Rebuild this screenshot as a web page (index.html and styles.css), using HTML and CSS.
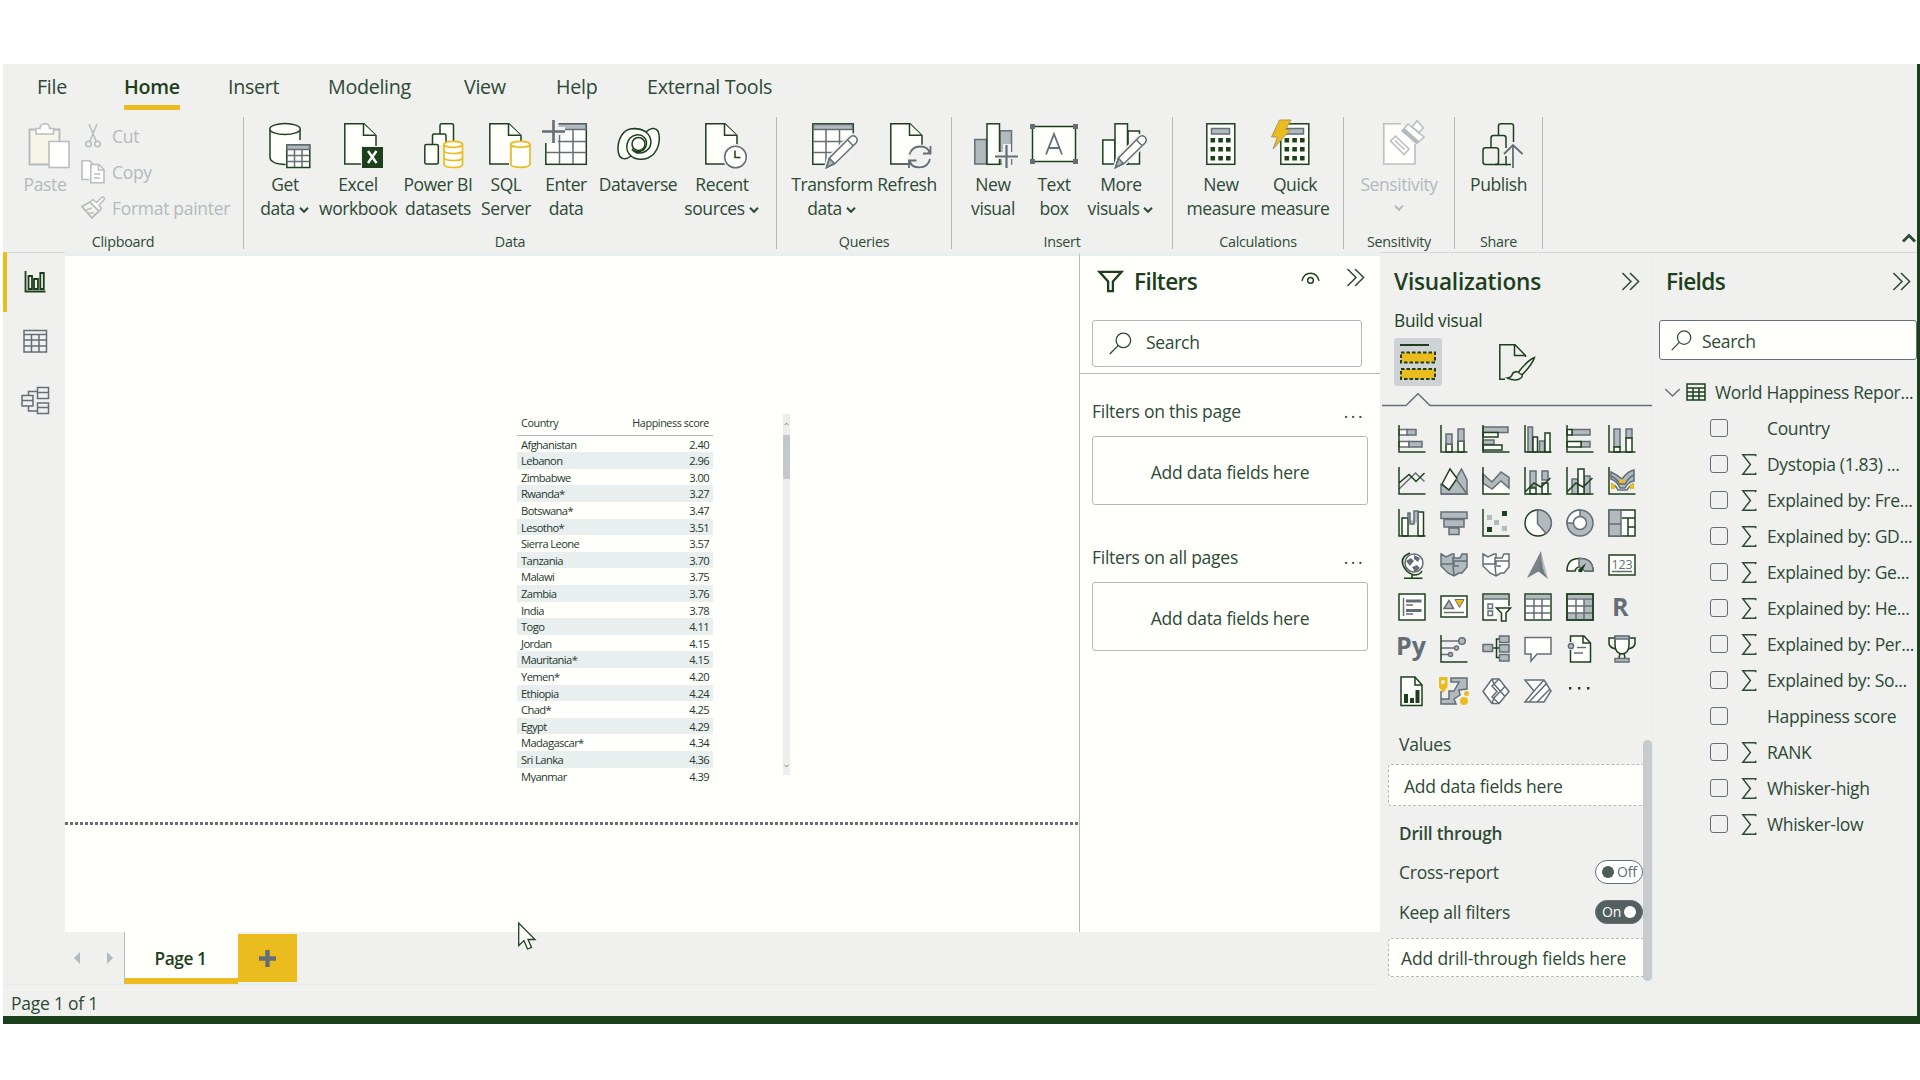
FILE: index.html
```html
<!DOCTYPE html>
<html lang="en">
<head>
<meta charset="utf-8">
<title>Report editor</title>
<link rel="stylesheet" href="styles.css">
</head>
<body>
<svg class="defs" width="0" height="0">
  <symbol id="page" viewBox="0 0 48 48" overflow="visible"><path class="w" d="M0.8 3.8H20L32 15.5V44H0.8Z"/><path class="w" d="M19.5 3.8V15.2H31.5"/></symbol>
  <symbol id="chev" viewBox="0 0 10 8"><path d="M1 1.8L5 5.8L9 1.8" fill="none" stroke="currentColor" stroke-width="2"/></symbol>
  <symbol id="dbl" viewBox="0 0 20 20"><path d="M1.5 1L10.5 10L1.5 19M9.5 1L18.5 10L9.5 19" fill="none" stroke="currentColor" stroke-width="1.6"/></symbol>
  <symbol id="lens" viewBox="0 0 24 24"><circle cx="15" cy="8.7" r="7.6" fill="none" stroke="currentColor" stroke-width="1.4"/><path d="M9.5 14.2L.8 23" stroke="currentColor" stroke-width="1.4"/></symbol>
  <symbol id="pencil" viewBox="0 0 48 48" overflow="visible"><path class="halo" d="M18.500 47.500L21.500 38L42 17.200Q45 14.500 47.800 17T48 23L27 43.500Z"/><path class="w s" d="M18.500 47.500L21.500 38L42 17.200Q45 14.500 47.800 17T48 23L27 43.500Z"/><path class="f s" d="M18.500 47.500L21.500 38.500L26.500 43.500Z"/><path class="n s" d="M39.500 20L45 25.500"/></symbol>
  <symbol id="calc" viewBox="0 0 48 48" overflow="visible"><rect class="w" x="9.800" y="3.800" width="28" height="40.500"/><rect class="f s" x="14.500" y="8.500" width="18" height="5.500"/><path class="k" d="M13.500 18h4.600v4.600h-4.600zM21.300 18h4.600v4.600h-4.600zM29 18h4.600v4.600H29zM13.500 27h4.600v4.600h-4.600zM21.300 27h4.600v4.600h-4.600zM29 27h4.600v4.600H29zM13.500 36h4.600v4.600h-4.600zM21.300 36h4.600v4.600h-4.600zM29 36h4.600v4.600H29z"/></symbol>
  <symbol id="sigma" viewBox="0 0 16 24"><path d="M15 3.500V1.800H1.500L9.500 12L1.500 22.200H15V20.500" fill="none" stroke="currentColor" stroke-width="1.500"/></symbol>
</svg>

<div class="window">
  <nav class="tabs">
    <span>File</span><span class="active">Home</span><span>Insert</span><span>Modeling</span><span>View</span><span>Help</span><span>External Tools</span>
  </nav>

  <div class="ribbon">
    <section class="group clip">
      <div class="items muted">
        <div class="item"><svg class="ico" viewBox="0 0 48 48"><path class="cream" d="M8.500 9.500H38.500V44.500H8.500Z"/><path class="w" d="M15 14V8.500H19Q19 3.800 24 3.800T28.500 8.500H32.500V14Z"/><rect class="w" x="28" y="21.500" width="20" height="26"/></svg><span>Paste</span></div>
        <ul class="cmds">
          <li><svg class="mini" viewBox="0 0 24 24"><path class="n" d="M8 0L15.500 18M16 0L8.500 18"/><circle class="n" cx="7.500" cy="20" r="2.700"/><circle class="n" cx="16.500" cy="20" r="2.700"/></svg>Cut</li>
          <li><svg class="mini" viewBox="0 0 24 24"><path class="w" d="M8 19.500H1V.8H8.500L12 4"/><path class="w" d="M9.800 4.500H18L23 9.500V22.800H9.800Z"/><path class="n" d="M17.500 4.500V10H23M13 14H19M13 18H19"/></svg>Copy</li>
          <li><svg class="mini" viewBox="0 0 24 24"><path class="cream" d="M1 10.500L9 6L18 15L11 22Z"/><path class="w" d="M9 6L12 3.500L15.500 6.500L21 1Q24 1 23.200 3.500L18 9L20.500 12.500L18 15Z"/><path class="n" d="M5 14L11 12M7 17L13 17"/></svg>Format painter</li>
        </ul>
      </div>
      <h6>Clipboard</h6>
    </section>

    <section class="group data">
      <div class="items">
        <div class="item"><svg class="ico" viewBox="0 0 48 48"><path class="w" d="M9 8.500V38Q10 44 24.500 44.500H39V8.500"/><path class="e" d="M24.500 40H48V48H24.500ZM37.500 20H42V48H37.500Z"/><ellipse class="w" cx="24" cy="9" rx="15.200" ry="5.500"/><rect class="w" x="25.800" y="25" width="23" height="22.500"/><path class="f s" d="M26 25H48.500V29.500H26Z"/><path class="n s" d="M33.500 29.500V47M41 29.500V47M26 35.500H48.500M26 41.500H48.500"/></svg><span>Get</span><span>data<svg class="chev"><use href="#chev"/></svg></span></div>
        <div class="item"><svg class="ico" viewBox="0 0 48 48"><g class="slate"><use href="#page" x="10" width="48" height="48"/></g><path class="e" d="M27 26H49V46H27Z"/><rect class="k" x="28" y="27" width="21" height="21"/><path class="xl" d="M34 31L42.500 43M42.500 31L34 43"/></svg><span>Excel</span><span>workbook</span></div>
        <div class="item"><svg class="ico" viewBox="0 0 48 48"><rect class="w" x="26" y="3.800" width="13.500" height="30" rx="1.500"/><rect class="w" x="18.500" y="14" width="13.500" height="28" rx="1.500"/><path class="e" d="M17 25h30v22H17z"/><rect class="w" x="10.800" y="24.500" width="13.500" height="19.500" rx="1.500"/><path class="y" d="M30 24V44.500Q31 47.500 39.500 47.500T48.500 44.500V24"/><ellipse class="y" cx="39.200" cy="24.300" rx="9.300" ry="3"/><path class="y" d="M30 31Q31 33.500 39.500 33.500T48.500 31M30 38Q31 40.500 39.500 40.500T48.500 38"/></svg><span>Power BI</span><span>datasets</span></div>
        <div class="item"><svg class="ico" viewBox="0 0 48 48"><use href="#page" x="7" width="48" height="48"/><path class="e" d="M27 21H49V48H27Z"/><path class="y" d="M29 24V44.500Q30 47.300 38.500 47.300T48 44.500V24"/><ellipse class="y" cx="38.500" cy="24.300" rx="9.500" ry="3"/></svg><span>SQL</span><span>Server</span></div>
        <div class="item"><svg class="ico" viewBox="0 0 48 48"><rect class="w" x="3.800" y="3.800" width="40.500" height="40.500"/><path class="f s" d="M15 4H44V9.500H15Z"/><path class="n s" d="M17.500 10V44M31 10V44M4 21.500H44M4 32.500H44"/><path class="e" d="M-1 -1H16.500V7H23V15H16V23H-1Z"/><path class="plus" d="M0 11.500H23M11.500 0V23"/></svg><span>Enter</span><span>data</span></div>
        <div class="item"><svg class="ico" viewBox="0 0 48 48"><path class="w" d="M32 12Q25 7.500 16 9C5 12 3 26 4.500 33C6 40 12 40 17 36C20 39 27 40.500 34 38C45 33 47 19 44 11C41 7 36 8 32 12Z"/><path class="n" d="M17 36C10 30 12 17 22 15C29 14 34 19 32 26C30 32 22 34 18 29M32 12C39 18 39 29 29 32.500C24 34 20 32 18 29"/><circle class="w" cx="24.500" cy="24" r="6.500"/></svg><span>Dataverse</span></div>
        <div class="item"><svg class="ico" viewBox="0 0 48 48"><use href="#page" x="7" width="48" height="48"/><circle class="e" cx="37.500" cy="37" r="13"/><circle class="w s" cx="37.500" cy="37" r="10.800"/><path class="n" d="M37 30.500V37.500H42.500"/></svg><span>Recent</span><span>sources<svg class="chev"><use href="#chev"/></svg></span></div>
      </div>
      <h6>Data</h6>
    </section>

    <section class="group queries">
      <div class="items">
        <div class="item"><svg class="ico" viewBox="0 0 48 48"><rect class="w" x="4.800" y="3.800" width="40.500" height="40.500"/><path class="f s" d="M5.500 4.500H44.500V9.500H5.500Z"/><path class="n s" d="M18 10V44M31.500 10V44M5 21.500H45M5 32.500H45"/><path class="e" d="M46.500 20V46H26L40 30Z"/><use href="#pencil" width="48" height="48"/></svg><span>Transform</span><span>data<svg class="chev"><use href="#chev"/></svg></span></div>
        <div class="item"><svg class="ico" viewBox="0 0 48 48"><use href="#page" x="7" width="48" height="48"/><circle class="e" cx="37" cy="37" r="12.500"/><path class="n s r" d="M26.500 34.500Q29 26.500 37 26.500T46.500 32.500M47.500 26V33.500H40M47 39Q45 47.300 36.500 47.300T27 41.500M26 48V40.500H33.500"/></svg><span>Refresh</span></div>
      </div>
      <h6>Queries</h6>
    </section>

    <section class="group insert">
      <div class="items">
        <div class="item"><svg class="ico" viewBox="0 0 48 48"><path class="f s" d="M5.800 19.500H17.500V44H5.800ZM31 10.800H42.500V44H31Z"/><rect class="w" x="18" y="3.800" width="12.500" height="40.500"/><path class="e" d="M34 24H42V32H49V39H42V46H33V39H27V32H34Z"/><path class="plus t" d="M26 36.500H49M37.500 25V48"/></svg><span>New</span><span>visual</span></div>
        <div class="item"><svg class="ico" viewBox="0 0 48 48"><rect class="w" x="2.500" y="6.500" width="43" height="35"/><path class="h" d="M0 4h5v5H0zM43 4h5v5h-5zM0 39h5v5H0zM43 39h5v5h-5z"/><path class="n s r" d="M16 34.500L24 14L32 34.500M18.500 28H29.500"/></svg><span>Text</span><span>box</span></div>
        <div class="item"><svg class="ico" viewBox="0 0 48 48"><path class="w" d="M5.800 20H18V44H5.800ZM31 11H42.500V44H31Z"/><rect class="w" x="18" y="3.800" width="12.500" height="40.500"/><use href="#pencil" width="48" height="48"/></svg><span>More</span><span>visuals<svg class="chev"><use href="#chev"/></svg></span></div>
      </div>
      <h6>Insert</h6>
    </section>

    <section class="group calcs">
      <div class="items">
        <div class="item"><svg class="ico" viewBox="0 0 48 48"><use href="#calc" width="48" height="48"/></svg><span>New</span><span>measure</span></div>
        <div class="item"><svg class="ico" viewBox="0 0 48 48"><use href="#calc" width="48" height="48"/><path class="bolt" d="M8.500 0H20L14.500 9.500H19.500L2 29L6.500 17H.5Z"/></svg><span>Quick</span><span>measure</span></div>
      </div>
      <h6>Calculations</h6>
    </section>

    <section class="group sens">
      <div class="items muted">
        <div class="item"><svg class="ico" viewBox="0 0 48 48"><path class="w" d="M8.800 3.800H40V44H8.800Z"/><path class="e" d="M25 2H42V24H38Z"/><path class="w" d="M15.500 21L20.500 16L34 29L29 34.500Z"/><path class="n" d="M20 20.500L29.500 29.500"/><path class="w" d="M27 11L33 4L49 17L42 23.500Z"/><path class="f" d="M26.500 11L29.500 8L44 21L41 23.500Z"/><path class="w" d="M37 7L42 .8L48.500 8L44 12.500Z"/></svg><span>Sensitivity</span><span><svg class="chev solo"><use href="#chev"/></svg></span></div>
      </div>
      <h6>Sensitivity</h6>
    </section>

    <section class="group share">
      <div class="items">
        <div class="item"><svg class="ico" viewBox="0 0 48 48"><g class="r"><path class="n" d="M23.500 15V6Q23.500 3.800 26 3.800H36Q38.500 3.800 38.500 6V22M16 27V18Q16 15.500 18.500 15.500H28.500Q31 15.500 31 18V28M31 36V44.500H36"/><rect class="n" x="8" y="27.800" width="15.500" height="16.700" rx="2.500"/><path class="n" d="M20 44.500H32"/></g><path class="n s r" d="M38 48V25M29 34L38 25L47.500 34"/></svg><span>Publish</span></div>
      </div>
      <h6>Share</h6>
    </section>
    <svg class="collapse" viewBox="0 0 14 10"><path d="M1 8.500L7 2.500L13 8.500" fill="none" stroke="currentColor" stroke-width="2.800"/></svg>
  </div>

  <div class="main">
    <div class="work">
      <div class="stage">
        <aside class="rail">
          <div class="on"><svg viewBox="0 0 24 24"><path class="n" d="M2.500 1V21.500H22.500" stroke-width="2"/><path class="n" d="M5.500 6h3.500v13H5.500zM11 9h4v10h-4zM17.300 3h3.500v16h-3.500z" stroke-width="2"/></svg></div>
          <div><svg viewBox="0 0 24 24"><path class="n s" d="M1 1.500H23.500V23H1ZM1 5.500H23.500M1 11H23.500M1 17H23.500M8.500 5.500V23M16 5.500V23"/></svg></div>
          <div><svg class="wide" viewBox="0 0 28 28"><path class="n s" d="M1 9.500H12V20H1ZM1 14.500H12M16.500 1.500H27.500V12.500H16.500ZM16.500 6.500H27.500M16.500 17H27.500V27.500H16.500ZM16.500 21.500H27.500M7.500 9V5.500H16M7.500 20V25H16"/></svg></div>
        </aside>
        <div class="canvas">
          <div class="visual">
            <table>
              <thead><tr><th>Country</th><th>Happiness score</th></tr></thead>
              <tbody>
                <tr><td>Afghanistan</td><td>2.40</td></tr>
                <tr><td>Lebanon</td><td>2.96</td></tr>
                <tr><td>Zimbabwe</td><td>3.00</td></tr>
                <tr><td>Rwanda*</td><td>3.27</td></tr>
                <tr><td>Botswana*</td><td>3.47</td></tr>
                <tr><td>Lesotho*</td><td>3.51</td></tr>
                <tr><td>Sierra Leone</td><td>3.57</td></tr>
                <tr><td>Tanzania</td><td>3.70</td></tr>
                <tr><td>Malawi</td><td>3.75</td></tr>
                <tr><td>Zambia</td><td>3.76</td></tr>
                <tr><td>India</td><td>3.78</td></tr>
                <tr><td>Togo</td><td>4.11</td></tr>
                <tr><td>Jordan</td><td>4.15</td></tr>
                <tr><td>Mauritania*</td><td>4.15</td></tr>
                <tr><td>Yemen*</td><td>4.20</td></tr>
                <tr><td>Ethiopia</td><td>4.24</td></tr>
                <tr><td>Chad*</td><td>4.25</td></tr>
                <tr><td>Egypt</td><td>4.29</td></tr>
                <tr><td>Madagascar*</td><td>4.34</td></tr>
                <tr><td>Sri Lanka</td><td>4.36</td></tr>
                <tr><td>Myanmar</td><td>4.39</td></tr>
              </tbody>
            </table>
            <div class="vscroll"><svg viewBox="0 0 6 4"><path d="M.5 3.500L3 1L5.500 3.500"/></svg><i></i><svg viewBox="0 0 6 4"><path d="M.5 .5L3 3L5.500 .5"/></svg></div>
          </div>
          <div class="pagebreak"></div>
        </div>
        <aside class="filters">
          <header>
            <svg class="funnel" viewBox="0 0 26 23"><path d="M1.500 1.500H24.500L15.500 11.500V21.500H10.500V11.500Z" fill="none" stroke="currentColor" stroke-width="2.400"/></svg>
            <h2>Filters</h2>
            <svg class="eye" viewBox="0 0 20 14"><path class="n" d="M1 10Q3 2 10 2T19 10"/><circle class="n" cx="10" cy="9.500" r="3"/></svg>
            <svg class="dbl"><use href="#dbl"/></svg>
          </header>
          <div class="search"><svg class="lens"><use href="#lens"/></svg><span>Search</span></div>
          <hr>
          <div class="sec"><h3>Filters on this page<b>...</b></h3><div class="drop">Add data fields here</div></div>
          <div class="sec"><h3>Filters on all pages<b>...</b></h3><div class="drop">Add data fields here</div></div>
        </aside>
      </div>
      <footer class="pages">
        <svg class="arr" viewBox="0 0 6 12"><path d="M6 0V12L0 6Z"/></svg>
        <svg class="arr" viewBox="0 0 6 12"><path d="M0 0V12L6 6Z"/></svg>
        <div class="tab">Page 1</div>
        <div class="add"><svg viewBox="0 0 18 18"><path d="M9 0V18M0 9H18" stroke="#636e77" stroke-width="4.600"/></svg></div>
      </footer>
    </div>

    <aside class="viz">
      <header><h2>Visualizations</h2><svg class="dbl"><use href="#dbl"/></svg></header>
      <h4>Build visual</h4>
      <div class="modes">
        <div class="mode"><svg viewBox="0 0 48 48"><path d="M6 7H35" stroke="#1c401c" stroke-width="2"/><path d="M7 14.500H41V24.500H7ZM7 31H41V41H7Z" fill="#eabc1e" stroke="#1c401c" stroke-width="2" stroke-dasharray="3.500 2"/></svg></div>
        <svg class="brush" viewBox="0 0 36 36"><path class="n" d="M6 35.300H.8V.8H16L26.500 11.500V13M15.500 .8V11.500H26"/><path class="n" d="M35.500 13.500Q30 15 19.500 28Q21 31 23.500 30.500Q33.500 20 35.500 13.500ZM19 28Q14 27 13 31Q12 33.500 8.500 34Q17 38 22 34Q24 32 22.500 30"/></svg>
      </div>
      <svg class="notch" viewBox="0 0 270 14"><path d="M0 12.500H24L36 .8L48 12.500H270" fill="none" stroke="#636e77" stroke-width="1.400"/></svg>
      <div class="gallery">
        <svg viewBox="0 0 28 28"><path class="w s" d="M1 4.500H10V10H1ZM1 16.500H11V22H1Z"/><path class="f s" d="M9 4.500H18V10H9ZM11 16.500H24V22H11Z"/><path class="n" d="M1 0V27H27.500"/></svg>
        <svg viewBox="0 0 28 28"><path class="w" d="M6 19H12V27H6ZM18 16H24V27H18Z"/><path class="f s" d="M6 9H12V19H6ZM18 4H24V16H18Z"/><path class="n" d="M1 0V27H27.500"/></svg>
        <svg viewBox="0 0 28 28"><path class="f s" d="M1 2H26V7.500H1ZM1 15H12V19.500H1Z"/><path class="w" d="M1 7.500H16V12H1ZM1 20H20V25H1Z"/><path class="n" d="M1 0V27H27.500"/></svg>
        <svg viewBox="0 0 28 28"><path class="f s" d="M4 2H8.500V27H4ZM15.500 16H20.500V27H15.500Z"/><path class="w" d="M9 12H13.500V27H9ZM21 8H26V27H21Z"/><path class="n" d="M1 0V27H27.500"/></svg>
        <svg viewBox="0 0 28 28"><path class="f s" d="M6 4.500H24V10H6ZM15 16.500H24V22H15Z"/><path class="w" d="M1 4.500H6V10H1ZM1 16.500H15V22H1Z"/><path class="n" d="M1 0V27H27.500"/></svg>
        <svg viewBox="0 0 28 28"><path class="f s" d="M6 4H12V22H6ZM18 4H24V13H18Z"/><path class="w" d="M6 22H12V27H6ZM18 13H24V27H18Z"/><path class="n" d="M1 0V27H27.500"/></svg>

        <svg viewBox="0 0 28 28"><path class="n s" d="M1 22L17.500 6L26.500 14.500"/><path class="n" d="M1 16L11 7.500L18 14.500L26.500 6M1 0V27H27.500"/></svg>
        <svg viewBox="0 0 28 28"><path class="f s" d="M1 27V17.500L9 23L21.500 2L27 13V27Z"/><path class="w" d="M2 17L10 2L17 11.500L9 23Z"/><path class="n s" d="M16 12L27 27H1"/></svg>
        <svg viewBox="0 0 28 28"><path class="paper" d="M1 16L10 22L19 14L27 21V27H1Z"/><path class="f s" d="M1 7L10 15L19 5L27 10.500V21L19 14L10 22L1 16Z"/><path class="n" d="M1 0V27H27.500"/></svg>
        <svg viewBox="0 0 28 28"><path class="f s" d="M6 4H12V20H6ZM18 4H24V13H18Z"/><path class="w" d="M6 21H12V27H6ZM18 16H24V27H18Z"/><path class="n" d="M1 0V27H27.500M1 25L10 16L17 20L26.500 11"/></svg>
        <svg viewBox="0 0 28 28"><path class="f s" d="M6 12H12V27H6ZM18 9H24V27H18Z"/><path class="w" d="M12 2H18V27H12Z"/><path class="n" d="M1 0V27H27.500M1 25L10 16L17 20L26.500 11"/></svg>
        <svg viewBox="0 0 28 28"><path class="f s" d="M3 5Q9 8 14 12Q20 4 26 3V14Q20 15 17 21H12Q9 14 3 12Z"/><path class="n s" d="M3 9Q9 12 12 17H17Q21 10 26 8M3 17Q7 17 10 23H19Q22 18 26 17"/><path fill="#eabc1e" d="M11 12.500H17V16H11ZM3 17H7V22H3ZM22 17H26V22H22Z"/><path class="n" d="M1 0V27H27.500"/></svg>

        <svg viewBox="0 0 28 28"><path class="w" d="M4 9H10V27H4ZM20 3H25.500V27H20Z"/><path class="f s" d="M10 9V4H12V15H16V2H20V15"/><path class="n" d="M1 0V27H27.500"/></svg>
        <svg viewBox="0 0 28 28"><path class="f s" d="M1 3H27V9.500H1ZM4 10.500H24V18H4ZM9 19H19V25.500H9Z"/></svg>
        <svg viewBox="0 0 28 28"><path class="n" d="M1 0V27H27.500"/><path class="f" d="M5 6h5v5H5zM12 11h5v5h-5zM20 17h5v5h-5z"/><path class="k" d="M20 2h5v5h-5zM5 18h5v5H5z"/></svg>
        <svg viewBox="0 0 28 28"><circle class="w" cx="14" cy="14" r="13"/><path class="f s" d="M13.500 1A13 13 0 0 1 22 24.500L13.500 14.500Z"/></svg>
        <svg viewBox="0 0 28 28"><circle class="f s" cx="14" cy="14" r="13"/><path class="w s" d="M14 1A13 13 0 0 0 1 14H8A6.500 6.500 0 0 1 14 7.500Z"/><circle class="w s" cx="14" cy="14" r="6.500"/></svg>
        <svg viewBox="0 0 28 28"><path class="w" d="M1 1H27V27H1ZM14 9H27M20 18H27M20 9V27"/><path class="f s" d="M1 1H13V27H1ZM1 15H13"/></svg>

        <svg viewBox="0 0 28 28"><circle class="w s" cx="16" cy="12" r="9"/><path class="h" d="M8 10l5-3 3 3-4 5zM14 16l5-2 3 3-5 4zM16 4l6 3-2 4-4-3z"/><path class="n" d="M12 2Q2 6 5 14T16 24Q22 24 24 20M14 24V27M6 27.200H24.500"/></svg>
        <svg viewBox="0 0 28 28"><path class="f s" d="M1 3L6 6L12 3H14V7H20L22 3H27V16L22 22H19L14 25L8 22L1 15Z"/><path class="n s" d="M1 13H13V6M14 14V10H27M19 15H13L14 24"/></svg>
        <svg viewBox="0 0 28 28"><path class="w s" d="M1 3L6 6L12 3H14V7H20L22 3H27V16L22 22H19L14 25L8 22L1 15Z"/><path class="n s" d="M1 13H13V6M14 14V10H27M19 15H13L14 24"/></svg>
        <svg viewBox="0 0 28 28"><path class="f" d="M17 0L24 28L14.500 20Z"/><path class="h" d="M17 0L3 27L14.500 20.500L24 28Q17 20 17 0Z" opacity=".85"/></svg>
        <svg viewBox="0 0 28 28"><path class="w" d="M1 20Q1 7 14 7.500T27 20H19Q18 16 14 16T9 20Z"/><path class="f s" d="M13 7.500Q27 7 27 20H19L13 16Z"/><path class="k" d="M12 19L20 12L16 21Q12 22 12 19Z"/></svg>
        <svg viewBox="0 0 28 28"><rect class="w" x="1" y="4" width="26" height="20"/><text x="3.500" y="18" class="num">123</text><path class="n s" d="M4 20.500H24"/></svg>

        <svg viewBox="0 0 28 28"><rect class="w" x="1" y="1" width="26" height="26"/><path class="n s" d="M5.500 5V23M8 12H15M8 21H15"/><path class="h" d="M8 6.500h15.500v3H8zM8 16h15.500v3H8z"/></svg>
        <svg viewBox="0 0 28 28"><rect class="w" x="1" y="3" width="26" height="21"/><path class="f s" d="M4 15.500L9 7.500L13.500 15.500Z"/><path fill="#eabc1e" stroke="#636e77" d="M15 6.500H24L19.500 14.500Z"/><path class="n s" d="M4 19.500H24"/></svg>
        <svg viewBox="0 0 28 28"><rect class="w" x="1" y="1" width="26" height="26"/><path class="f" d="M2 2H26V5.500H2Z"/><path class="n s" d="M1 6H27M6 11h4.500v4.500H6zM6 18h4.500v4.500H6z"/><path class="e" d="M15 13H28.500V28H15Z"/><path class="w" d="M14.500 15H28.500L24 20V28H19.500V20Z"/></svg>
        <svg viewBox="0 0 28 28"><rect class="w" x="1" y="1" width="26" height="26"/><path class="f" d="M2 2H26V5H2Z"/><path class="n s" d="M1 6H27M1 13H27M1 20H27M10 6V27M18 6V27"/></svg>
        <svg viewBox="0 0 28 28"><rect class="w" x="1" y="1" width="26" height="26"/><path class="f" d="M2 2H26V5H2ZM18 6H26V26H2V20H18Z"/><path class="n s" d="M1 6H27M1 13H27M1 20H27M10 6V27M18 6V27"/><rect class="n" x="1" y="1" width="26" height="26"/></svg>
        <svg viewBox="0 0 28 28"><text x="4" y="22.500" class="ltr">R</text></svg>

        <svg viewBox="0 0 28 28"><text x="-2" y="20" class="ltr">Py</text></svg>
        <svg viewBox="0 0 28 28"><path class="n s" d="M1 6H19M1 13H14M1 19.500H8"/><circle class="f s" cx="22" cy="6" r="3.300"/><circle class="f s" cx="16.500" cy="13" r="2"/><circle class="f s" cx="10.500" cy="19.500" r="2"/><path class="n" d="M1 0V27H27.500"/></svg>
        <svg viewBox="0 0 28 28"><path class="n" d="M10 13H18M18 4H14.500V22.500H18"/><path class="f s" d="M1 9.500H10.500V16.500H1ZM17.500 1H27V7.500H17.500ZM17.500 9.800H27V17H17.500ZM17.500 19.500H27V26H17.500Z"/></svg>
        <svg viewBox="0 0 28 28"><path class="w s" d="M1 2.500H27V19H13L7 26V19H1Z"/></svg>
        <svg viewBox="0 0 28 28"><path class="w" d="M4.500 1H18L24.500 8V27H4.500Z"/><path class="n" d="M17 1V8H24"/><path class="e" d="M1 7H8V15H1Z"/><circle class="f s" cx="5" cy="11" r="2.600"/><path class="n s" d="M11 12.500H20M8 18H17"/></svg>
        <svg viewBox="0 0 28 28"><path class="n" d="M7 3H1V9Q2 13 8 14M21 3H27V9Q26 13 20 14"/><path class="w" d="M7 1.500H21V10Q21 18 14 19Q7 18 7 10Z"/><path class="n" d="M12 18L11 23M16 18L17 23"/><path class="f s" d="M7 1H21V4H7ZM7 23.500H21V27H7Z"/></svg>

        <svg viewBox="0 0 28 28"><path class="w" d="M3 0H17L24 8V28.500H3Z"/><path class="n" d="M17 0V8H24"/><path class="k" d="M6 17h4v9H6zM12 21h4v5h-4zM17.500 13h4v13h-4z"/></svg>
        <svg viewBox="0 0 28 28"><path class="f s" d="M1 14V27H16L14 22L20 18L19 13L27 12V1H11V5H19L14 14H9V22H1Z"/><path fill="#eabc1e" d="M-1 0H7.500V10L3 16L-1 10Z"/><circle cx="24" cy="24" r="4" fill="#eabc1e"/><circle cx="26.500" cy="16.500" r="2.500" fill="#eabc1e"/><circle cx="3" cy="5" r="2" fill="#f0f0ef"/></svg>
        <svg viewBox="0 0 28 28"><path class="w s" d="M10 2H17L27 14.500L17 26.500H10L1 14.500Z"/><path class="n s" d="M17 2L10 9L15 14.500L10 20L17 26.500M10 2L12 7L23 19.500M23 9.500L12 21L10 26.500"/></svg>
        <svg viewBox="0 0 28 28"><path class="w s" d="M1 3H20L27 14L20 25H1L10 14Z"/><path class="n s" d="M10 14L20 3M5 25L23 6M13 25L26 12"/></svg>
        <svg viewBox="0 0 28 28"><path class="k" d="M3 10h2.400v2.400H3zM12 10h2.400v2.400H12zM21 10h2.400v2.400H21z"/></svg>
      </div>
      <div class="wells">
        <div class="inner">
          <label>Values</label>
          <div class="well a">Add data fields here</div>
          <label class="strong">Drill through</label>
          <div class="row"><label>Cross-report</label><span class="toggle"><i></i>Off</span></div>
          <div class="row"><label>Keep all filters</label><span class="toggle on">On<i></i></span></div>
          <div class="well b">Add drill-through fields here</div>
        </div>
        <div class="bar"></div>
      </div>
    </aside>

    <aside class="fields">
      <header><h2>Fields</h2><svg class="dbl"><use href="#dbl"/></svg></header>
      <div class="search"><svg class="lens"><use href="#lens"/></svg><span>Search</span></div>
      <div class="tbl"><svg class="exp" viewBox="0 0 18 10"><path d="M1 1L9 9L17 1" fill="none" stroke="#636e77" stroke-width="1.500"/></svg><svg class="grid" viewBox="0 0 20 18"><path class="n" d="M1 1H19V17H1ZM1 5H19M1 9H19M1 13H19M7 5V17M13 5V17"/></svg>World Happiness Repor...</div>
      <ul>
        <li><i></i><em></em>Country</li>
        <li><i></i><svg><use href="#sigma"/></svg>Dystopia (1.83) ...</li>
        <li><i></i><svg><use href="#sigma"/></svg>Explained by: Fre...</li>
        <li><i></i><svg><use href="#sigma"/></svg>Explained by: GD...</li>
        <li><i></i><svg><use href="#sigma"/></svg>Explained by: Ge...</li>
        <li><i></i><svg><use href="#sigma"/></svg>Explained by: He...</li>
        <li><i></i><svg><use href="#sigma"/></svg>Explained by: Per...</li>
        <li><i></i><svg><use href="#sigma"/></svg>Explained by: So...</li>
        <li><i></i><em></em>Happiness score</li>
        <li><i></i><svg><use href="#sigma"/></svg>RANK</li>
        <li><i></i><svg><use href="#sigma"/></svg>Whisker-high</li>
        <li><i></i><svg><use href="#sigma"/></svg>Whisker-low</li>
      </ul>
    </aside>
  </div>

  <div class="status">Page 1 of 1</div>
  <svg class="cursor" viewBox="0 0 18 28"><path d="M.7 1V23.500L6 18.500L9.500 27L13.500 25.500L10 17.500H17Z" fill="#fffffc" stroke="#1c401c" stroke-width="1.300"/></svg>
</div>
</body>
</html>
```
FILE: styles.css
```css
:root {
  --ink: #2c4a34;
  --dark: #1c401c;
  --slate: #636e77;
  --grey: #b3babe;
  --bg: #f0f0ef;
  --paper: #fffffc;
  --gold: #eabc1e;
}
* { box-sizing: border-box; margin: 0; padding: 0; }
body { background: #fff; color: var(--ink); font: 17.500px/24px "Open Sans", "Noto Sans", sans-serif; letter-spacing: -.25px; width: 1920px; height: 1080px; overflow: hidden; }
ul { list-style: none; }
h2, h3, h4, h6 { font-weight: 400; }
svg { display: block; flex: none; overflow: visible; }
.defs { position: absolute; }

.window { position: relative; margin: 64px 0 0 3px; width: 1917px; height: 960px; background: var(--bg); border-right: 3px solid var(--dark); border-bottom: 8px solid var(--dark); display: flex; flex-direction: column; }

/* drawing classes shared by the icons */
.w { fill: var(--paper); stroke: var(--dark); stroke-width: 1.5; }
.n { fill: none; stroke: var(--dark); stroke-width: 1.5; }
.f { fill: var(--grey); }
.s { stroke: var(--slate); stroke-width: 1.5; }
.r { stroke-width: 1.8; }
.k { fill: var(--dark); }
.h { fill: var(--slate); }
.e { fill: var(--bg); }
.paper { fill: var(--paper); }
.y { fill: var(--paper); stroke: var(--gold); stroke-width: 1.7; }
.halo { fill: var(--bg); stroke: var(--bg); stroke-width: 5; }
.plus { stroke: var(--slate); stroke-width: 2.6; fill: none; }
.plus.t { stroke-width: 2.2; }
.xl { stroke: #fff; stroke-width: 2.4; }
.bolt { fill: var(--gold); stroke: #a99a58; stroke-width: 1; }
.cream { fill: #f7f6e6; stroke: var(--grey); stroke-width: 1.8; }
.num { font-size: 12.5px; fill: var(--slate); letter-spacing: -.2px; }
.ltr { font-size: 25px; font-weight: 700; fill: var(--slate); letter-spacing: 0; }

/* menu */
.tabs { height: 48px; padding-left: 34px; display: grid; grid-template-columns: 87px 104px 100px 136px 92px 91px auto; font-size: 19.700px; letter-spacing: -.3px; line-height: 46px; justify-items: start; }
.tabs .active { font-weight: 600; color: var(--dark); line-height: 40px; height: 46px; padding-top: 3px; border-bottom: 5px solid var(--gold); }

/* ribbon */
.ribbon { height: 140px; display: flex; align-items: flex-start; padding-top: 5px; }
.group { height: 132px; border-right: 1px solid var(--grey); display: flex; flex-direction: column; justify-content: space-between; }
.items { display: flex; justify-content: center; padding-top: 3px; letter-spacing: -.42px; }
.item { display: flex; flex-direction: column; align-items: center; white-space: nowrap; }
.item > span { display: flex; align-items: center; height: 24px; }
.ico { width: 48px; height: 48px; margin-bottom: 4px; }
.chev { width: 10px; height: 8px; margin: 3px 1px 0 4px; }
.chev.solo { margin: 0; }
.group h6 { font-size: 14.300px; line-height: 16px; text-align: center; position: relative; top: 1px; }
.muted { color: #b3babe; }
.muted .w, .muted .n, .muted .s { stroke: #b9bfc3; stroke-width: 1.6; }
.clip { width: 241px; }
.clip .items { justify-content: flex-start; letter-spacing: -.3px; }
.clip .item { width: 48px; margin-left: 18px; }
.cmds { margin: -2px 0 0 12px; }
.cmds li { display: flex; align-items: center; gap: 7px; height: 36px; white-space: nowrap; }
.mini { width: 24px; height: 24px; }
.data { width: 533px; }
.queries { width: 175px; }
.insert { width: 221px; }
.calcs { width: 171px; }
.sens { width: 111px; }
.share { width: 88px; }
.data .items { display: grid; grid-template-columns: 72px 74px 86px 50px 70px 74px 94px; margin-left: 5px; justify-content: start; }
.queries .items { display: grid; grid-template-columns: 78px 72px; margin-left: 16px; justify-content: start; }
.insert .items { display: grid; grid-template-columns: 62px 60px 74px; margin-left: 10px; justify-content: start; }
.calcs .items { display: grid; grid-template-columns: 74px 74px; }
.collapse { width: 14px; height: 10px; margin: 116px 1px 0 auto; }

/* work area */
.main { height: 733px; display: flex; }
.work { width: 1377px; display: flex; flex-direction: column; }
.stage { height: 680px; display: flex; }
.rail { width: 62px; border-top: 1px solid #d5d9da; color: var(--slate); }
.rail div { height: 59px; display: flex; align-items: center; justify-content: center; padding: 0 0 2px 2px; }
.rail .on { border-left: 4px solid var(--gold); padding: 0 2px 0 0; margin-top: -1px; height: 60px; }
.rail svg { width: 24px; height: 24px; }
.rail .wide { width: 28px; height: 28px; }
.rail .on .n { stroke-width: 1.8; }
.canvas { width: 1014px; background: var(--paper); border-top: 4px solid #e9eeee; position: relative; }
.visual { position: absolute; left: 452px; top: 157px; width: 273px; height: 370px; display: flex; justify-content: space-between; align-items: flex-start; overflow: hidden; }
.visual table { width: 196px; border-collapse: separate; border-spacing: 0; font-size: 11.200px; letter-spacing: -.6px; line-height: 16px; color: #24382c; }
.visual th { font-weight: 400; text-align: left; height: 22.500px; line-height: 19px; padding: 0 4px; border-bottom: 1px solid #b3babe; vertical-align: top; font-size: 10.800px; letter-spacing: -.42px; }
.visual td { height: 16.620px; line-height: 15.600px; padding: 1px 4px 0; }
.visual tr > :last-child { text-align: right; }
.visual tbody tr:nth-child(even) { background: #e9eeee; }
.vscroll { width: 7px; height: 361px; background: #ededee; margin-top: 1px; display: flex; flex-direction: column; align-items: center; padding: 8px 0 7px; }
.vscroll svg { width: 5px; height: 4px; fill: none; stroke: var(--slate); }
.vscroll i { width: 7px; height: 44px; background: #c3c8cb; margin: 9px 0 auto; }
.pagebreak { position: absolute; left: 0; right: 0; top: 566px; height: 3px; background: repeating-linear-gradient(90deg, var(--slate) 0 3px, transparent 3px 5px); }

header { display: flex; align-items: center; color: var(--dark); }
h2 { font-size: 22.600px; font-weight: 600; line-height: 30px; letter-spacing: -.2px; }
.dbl { width: 19px; height: 19px; margin-left: auto; color: var(--ink); }
.search { display: flex; align-items: center; border: 1px solid var(--grey); border-radius: 3px; letter-spacing: -.3px; }
.lens { width: 23px; height: 23px; }

.filters { width: 301px; background: var(--paper); border-top: 4px solid #e9eeee; border-left: 1px solid var(--grey); }
.filters header { height: 50px; padding: 0 15px 0 18px; }
.filters h2 { margin-left: 11px; letter-spacing: -.6px; padding-top: 1px; }
.funnel { width: 25px; height: 23px; }
.eye { width: 19px; height: 14px; margin: -7px 0 0 auto; color: var(--ink); }
.filters .dbl { margin: -8px 0 0 26px; }
.filters .search { width: 270px; height: 47px; margin: 14px 0 6px 12px; padding-left: 16px; gap: 14px; }
.filters .search span { padding-bottom: 3px; }
.filters hr { border: 0; border-top: 1px solid var(--grey); }
.sec { padding: 25px 12px 0 12px; height: 146px; }
.sec h3 { font-size: 17.500px; line-height: 24px; display: flex; justify-content: space-between; padding-right: 3px; }
.sec b { font-weight: 400; letter-spacing: 2.500px; }
.drop { height: 69px; margin-top: 13px; border: 1px solid var(--grey); border-radius: 3px; display: flex; align-items: center; justify-content: center; padding-top: 2px; }

.pages { height: 53px; display: flex; padding-left: 71px; border-bottom: 1px solid #e6ebeb; }
.arr { width: 6px; height: 12px; margin: 20px 27px 0 0; fill: var(--grey); }
.arr + .arr { margin-right: 11px; }
.tab { width: 114px; height: 52px; background: var(--paper); border-left: 1px solid var(--grey); border-bottom: 6px solid var(--gold); font-weight: 600; font-size: 17.300px; letter-spacing: -.45px; line-height: 53px; text-align: center; color: var(--dark); padding-right: 2px; }
.add { width: 59px; height: 48px; margin-top: 2px; background: var(--gold); display: flex; align-items: center; justify-content: center; }
.add svg { width: 17px; height: 17px; }

/* visualizations */
.viz { width: 272px; border-top: 1px solid #d5d9da; }
.viz header { height: 55px; padding: 2px 12px 0 14px; }
.viz h4 { font-size: 17.300px; padding-left: 14px; font-weight: 500; line-height: 25px; height: 24px; color: var(--dark); margin-bottom: 6px; }
.modes { display: flex; padding-left: 14px; }
.mode { width: 48px; height: 48px; background: #cfd3d5; border-radius: 3px; }
.brush { width: 36px; height: 36px; margin: 6px 0 0 57px; }
.notch { width: 270px; height: 14px; margin: 7px 0 0 2px; }
.gallery { display: grid; grid-template-columns: repeat(6, 28px); grid-auto-rows: 28px; gap: 14px; padding: 18px 0 0 18px; }
.wells { display: flex; margin-top: 35px; height: 241px; }
.inner { width: 263px; padding-left: 8px; display: flex; flex-direction: column; }
.inner label { line-height: 24px; padding-left: 11px; margin-top: -8px; }
.inner .strong { font-weight: 600; margin: 16px 0 0; font-size: 17.200px; letter-spacing: -.2px; }
.well { background: var(--paper); border: 1px dashed var(--grey); border-right: 0; border-radius: 3px 0 0 3px; display: flex; align-items: center; white-space: nowrap; }
.a { height: 42px; margin-top: 8px; padding: 2px 0 0 15px; }
.b { height: 39px; padding: 1px 0 0 12px; margin-top: 6px; letter-spacing: -.15px; }
.row { height: 40px; display: flex; align-items: center; justify-content: space-between; }
.strong + .row { margin-top: 6px; }
.row label { margin: 0; }
.toggle { width: 48px; height: 24px; border: 1px solid var(--slate); border-radius: 12px; background: #fff; display: flex; align-items: center; gap: 3px; padding-left: 6px; font-size: 14px; line-height: 20px; color: var(--slate); letter-spacing: -.2px; }
.toggle i { width: 12px; height: 12px; border-radius: 50%; background: #4c5c58; flex: none; }
.toggle.on { background: #53605f; color: #fff; }
.toggle.on i { background: #fff; }
.bar { width: 9px; height: 241px; border-radius: 5px; background: #c6cbce; }

/* fields */
.fields { width: 265px; border-top: 1px solid #d5d9da; border-left: 1px solid #e6ebeb; white-space: nowrap; }
.fields header { height: 55px; padding: 2px 6px 0 13px; }
.fields h2 { letter-spacing: -.6px; }
.fields .search { margin: 12px 0 0 6px; height: 40px; border-color: var(--slate); background: var(--paper); padding-left: 11px; gap: 10px; }
.fields .search span { padding-top: 2px; }
.fields .lens { width: 21px; height: 21px; }
.tbl { display: flex; align-items: center; height: 36px; margin-top: 14px; padding-left: 11px; letter-spacing: -.35px; }
.exp { width: 17px; height: 9px; margin-right: 5px; }
.grid { width: 20px; height: 18px; margin-right: 9px; }
.fields li { display: flex; align-items: center; height: 36px; padding-left: 57px; letter-spacing: -.35px; }
.fields li i { width: 18px; height: 18px; border: 1.500px solid var(--slate); border-radius: 3px; margin-right: 13px; }
.fields li svg, .fields li em { width: 16px; height: 23px; margin-right: 10px; }

.status { height: 31px; padding-left: 8px; line-height: 36px; }
.cursor { position: absolute; left: 515px; top: 858px; width: 18px; height: 28px; }
```
